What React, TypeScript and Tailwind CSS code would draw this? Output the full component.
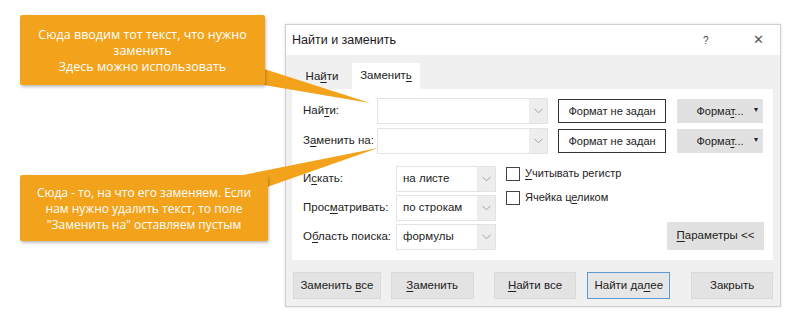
import React from 'react'

const font = { fontFamily: '"Liberation Sans", Arial, sans-serif' }

function U({ children }: { children: React.ReactNode }) {
  return <span className="underline underline-offset-2">{children}</span>
}

function Chevron() {
  return (
    <svg width="9" height="6" viewBox="0 0 9 6" className="text-[#a0a0a0]">
      <path d="M0.5 0.8 L4.5 4.8 L8.5 0.8" fill="none" stroke="currentColor" strokeWidth="1" />
    </svg>
  )
}

function Combo({ value, w }: { value?: string; w: string }) {
  return (
    <div className={`flex h-[26px] ${w} border border-[#e3e3e3] bg-white`}>
      <div className="flex flex-1 items-center pl-[6px] text-[11.5px] text-[#222]">{value}</div>
      <div className="flex w-[18px] items-center justify-center bg-[#ededed]">
        <Chevron />
      </div>
    </div>
  )
}

function Btn({ children, w, active }: { children: React.ReactNode; w: string; active?: boolean }) {
  return (
    <div
      className={`flex h-[27px] ${w} items-center justify-center whitespace-nowrap text-[11.5px] text-[#222] ${
        active ? 'border border-[#5a9bd5] bg-[#e6e6e6]' : 'border border-[#dadada] bg-[#e3e3e3]'
      }`}
    >
      <span>{children}</span>
    </div>
  )
}

function FormatBtn() {
  return (
    <div className="relative flex h-[24px] w-[86px] items-center justify-center bg-[#e1e1e1] text-[11px] text-[#222]">
      <span>
        Форма<U>т</U>...
      </span>
      <span className="absolute right-[5px] top-[5px] text-[8px]">▾</span>
    </div>
  )
}

function NoFormat() {
  return (
    <div className="flex h-[24px] w-[108px] items-center justify-center whitespace-nowrap border border-[#333] bg-white text-[11px] text-[#222]">
      Формат не задан
    </div>
  )
}

function Checkbox({ children }: { children: React.ReactNode }) {
  return (
    <div className="flex items-center gap-[5px] whitespace-nowrap text-[11px] text-[#222]">
      <div className="h-[14px] w-[14px] border border-[#444] bg-white" />
      <span className="-mt-[2px]">{children}</span>
    </div>
  )
}

export default function App() {
  return (
    <div className="relative h-[335px] w-[800px] overflow-hidden bg-white" style={font}>
      {/* dialog */}
      <div className="ml-[285px] mt-[24px] flex h-[283px] w-[496px] flex-col border border-[#cfcfcf] bg-[#f0f0f0] shadow-[0_0_3px_rgba(0,0,0,0.12)]">
        <div className="flex h-[30px] items-center bg-white pl-[6px] text-[12.5px] text-[#1a1a1a]">
          <span className="flex-1">Найти и заменить</span>
          <span className="w-[14px] text-[10px] text-[#444]">?</span>
          <span className="ml-[36px] mr-[16px] text-[13px] font-light text-[#555]">✕</span>
        </div>

        <div className="flex flex-col pl-[6px] pr-[7px]">
          <div className="mt-[8px] flex h-[26px] items-end text-[11.5px] text-[#222]">
            <div className="flex h-[25px] w-[60px] items-center justify-center">
              <span>
                На<U>й</U>ти
              </span>
            </div>
            <div className="flex h-[26px] w-[68px] items-center justify-center bg-white">
              <span>
                Заменит<U>ь</U>
              </span>
            </div>
          </div>

          <div className="flex h-[171px] flex-col whitespace-nowrap bg-white pl-[11px] pr-[9px] pt-[9px] text-[11.5px] text-[#222]">
            <div className="flex items-center">
              <span className="w-[74px]">
                Най<U>т</U>и:
              </span>
              <Combo w="w-[171px]" />
              <div className="ml-[10px]">
                <NoFormat />
              </div>
              <div className="ml-[11px]">
                <FormatBtn />
              </div>
            </div>
            <div className="mt-[4px] flex items-center">
              <span className="w-[74px]">
                З<U>а</U>менить на:
              </span>
              <Combo w="w-[171px]" />
              <div className="ml-[10px]">
                <NoFormat />
              </div>
              <div className="ml-[11px]">
                <FormatBtn />
              </div>
            </div>

            <div className="mt-[12px] flex">
              <div className="flex flex-col gap-[3px]">
                <div className="flex items-center">
                  <span className="w-[93px]">
                    И<U>с</U>кать:
                  </span>
                  <Combo value="на листе" w="w-[100px]" />
                </div>
                <div className="flex items-center">
                  <span className="w-[93px]">
                    Прос<U>м</U>атривать:
                  </span>
                  <Combo value="по строкам" w="w-[100px]" />
                </div>
                <div className="flex items-center">
                  <span className="w-[93px]">
                    О<U>б</U>ласть поиска:
                  </span>
                  <Combo value="формулы" w="w-[100px]" />
                </div>
              </div>
              <div className="ml-[10px] flex flex-col gap-[9px] pt-[1px]">
                <Checkbox>
                  <U>У</U>читывать регистр
                </Checkbox>
                <Checkbox>
                  Ячейка ц<U>е</U>ликом
                </Checkbox>
              </div>
              <div className="ml-auto flex items-end">
                <div className="flex h-[28px] w-[97px] items-center justify-center bg-[#e1e1e1]">
                  <span>
                    <U>П</U>араметры &lt;&lt;
                  </span>
                </div>
              </div>
            </div>
          </div>

          <div className="mt-[12px] flex items-center">
            <Btn w="w-[88px] ml-[1px]">
              Заменить <U>в</U>се
            </Btn>
            <Btn w="w-[83px] ml-[10px]">
              <U>З</U>аменить
            </Btn>
            <Btn w="w-[83px] ml-[20px]">
              <U>Н</U>айти все
            </Btn>
            <Btn w="w-[83px] ml-[11px]" active>
              Найти да<U>л</U>ее
            </Btn>
            <Btn w="w-[82px] ml-[21px]">Закрыть</Btn>
          </div>
        </div>
      </div>

      {/* callout tails */}
      <svg className="absolute left-0 top-0" width="800" height="335">
        <polygon points="258,67 370,103 258,84" fill="#f2a31b" />
        <polygon points="238,176 378,148 267,187 267,176" fill="#f2a31b" />
      </svg>

      {/* callouts */}
      <div
        className="absolute left-[20px] top-[15px] flex h-[70px] w-[245px] flex-col items-center rounded-[2px] bg-[#f2a31b] pt-[12px] text-center text-[12.5px] leading-[16px] text-white shadow-[1px_2px_3px_rgba(0,0,0,0.25)]"
        style={{ fontFamily: '"Open Sans", sans-serif' }}
      >
        <span>Сюда вводим тот текст, что нужно</span>
        <span>заменить</span>
        <span>Здесь можно использовать</span>
      </div>
      <div
        className="absolute left-[20px] top-[175px] flex h-[66px] w-[248px] flex-col items-center rounded-[2px] bg-[#f2a31b] pt-[10px] text-center text-[12px] leading-[16px] text-white shadow-[1px_2px_3px_rgba(0,0,0,0.25)]"
        style={{ fontFamily: '"Open Sans", sans-serif' }}
      >
        <span>Сюда - то, на что его заменяем. Если</span>
        <span>нам нужно удалить текст, то поле</span>
        <span>"Заменить на" оставляем пустым</span>
      </div>
    </div>
  )
}
